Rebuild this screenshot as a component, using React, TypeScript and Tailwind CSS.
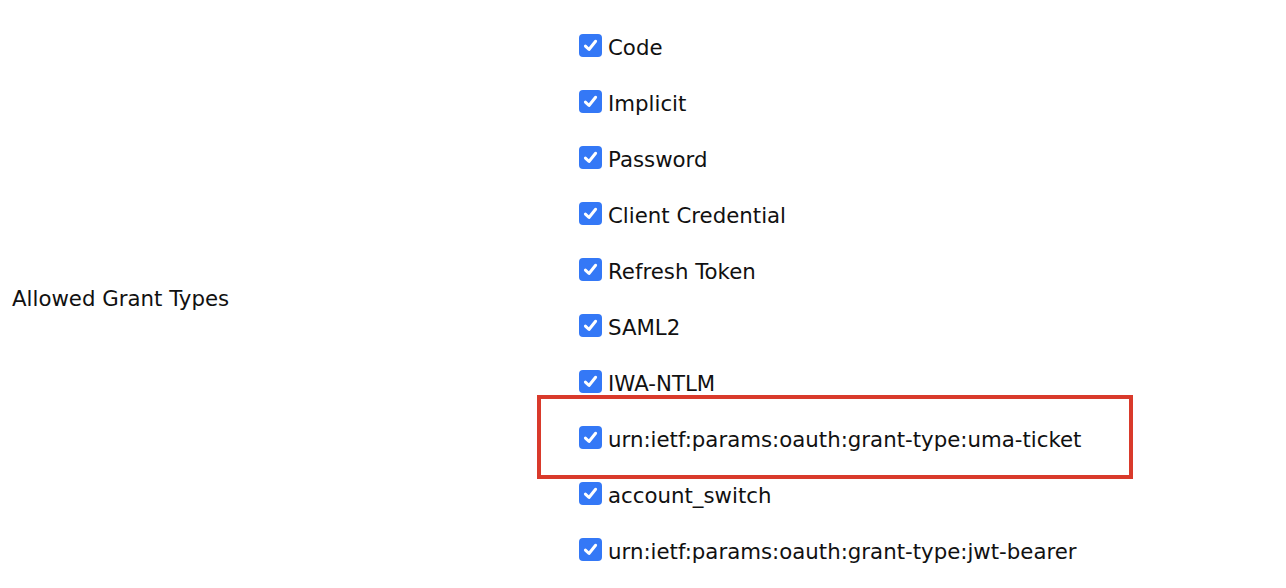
import React from 'react'

const grantTypes = [
    'Code',
    'Implicit',
    'Password',
    'Client Credential',
    'Refresh Token',
    'SAML2',
    'IWA-NTLM',
    'urn:ietf:params:oauth:grant-type:uma-ticket',
    'account_switch',
    'urn:ietf:params:oauth:grant-type:jwt-bearer',
]

const CheckBox = () => (
    <span className="w-[23px] h-[23px] rounded-[4px] bg-[#3478f6] flex items-center justify-center shrink-0">
        <svg width="17" height="17" viewBox="0 0 16 16" fill="none">
            <path d="M3.2 8.6 L6.6 11.8 L12.8 4" stroke="white" strokeWidth="2.8" strokeLinecap="round" strokeLinejoin="round" />
        </svg>
    </span>
)

const App = () => {
    return (
        <div className="w-[1286px] h-[588px] bg-white text-[#111] pt-[17px]" style={{ fontFamily: '"DejaVu Sans", Verdana, sans-serif' }}>
            <div className="flex">
                <div className="w-[579px] flex items-center pl-[12px] text-[21.3px] pt-[3px]">
                    Allowed Grant Types
                </div>
                <div className="flex flex-col">
                    {grantTypes.map((g, i) => (
                        <div key={g} className="relative h-[56px] flex items-center gap-[6px] text-[21.3px]">
                            <CheckBox />
                            <span className="pt-[5px]">{g}</span>
                            {i === 7 && (
                                <div className="absolute left-[-42px] top-[-14px] w-[596px] h-[84px] border-[4px] border-[#d93a2b]" />
                            )}
                        </div>
                    ))}
                </div>
            </div>
        </div>
    )
}

export default App
